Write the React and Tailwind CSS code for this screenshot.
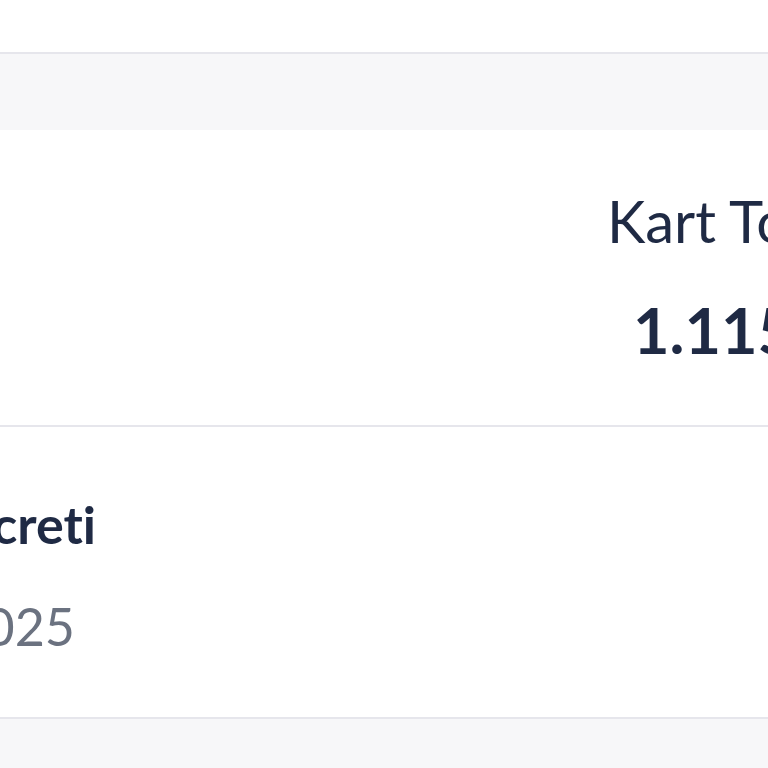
import React from 'react';

const font = { fontFamily: 'Lato, "Noto Sans", sans-serif' };

export default function App() {
    return (
        <div className="w-[768px] h-[768px] overflow-hidden bg-[#f7f7f9] [font-variant-ligatures:none]" style={font}>
            <div className="h-[54px] bg-white border-b-2 border-[#e6e6ec]" />
            <div className="h-[76px] bg-[#f7f7f9]" />
            {/* toplam satırı */}
            <div className="h-[297px] bg-white border-b-2 border-[#e6e6ec] overflow-hidden text-[#1f2a44]">
                <div className="pl-[607px] pt-[62px] whitespace-nowrap text-[58px] leading-none">
                    Kart Toplam
                </div>
                <div className="pl-[633px] pt-[48px] whitespace-nowrap text-[63px] font-bold leading-none">
                    1.115,00 ₺
                </div>
            </div>
            {/* ücret satırı */}
            <div className="h-[292px] bg-white border-b-2 border-[#e6e6ec] overflow-hidden">
                <div className="flex justify-end w-[96px] pt-[71px]">
                    <span className="whitespace-nowrap text-[52px] font-bold leading-none text-[#1f2a44]">
                        Kart Ücreti
                    </span>
                </div>
                <div className="flex justify-end w-[75px] pt-[50px]">
                    <span className="whitespace-nowrap text-[52px] leading-none text-[#6b7280]">
                        01.01.2025
                    </span>
                </div>
            </div>
        </div>
    );
}
